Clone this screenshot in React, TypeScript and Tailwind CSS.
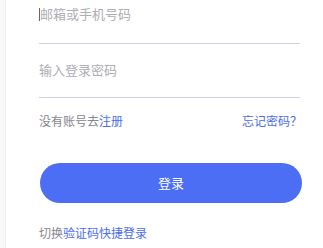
export default function App() {
  const font = { fontFamily: '"Noto Sans CJK SC", "Noto Sans", sans-serif' };
  return (
    <div className="flex h-[248px] w-[323px] overflow-hidden bg-white" style={font}>
      <div className="w-[6px] shrink-0 border-r border-[#eeeef2] bg-[#f8f8fa]" />
      <div className="flex w-[296px] flex-col pl-[33px]">
        {/* account */}
        <div className="flex h-[44px] w-[261px] items-start border-b border-[#cfd0e8] pt-[4px]">
          <span className="mt-[4px] h-[13px] w-px bg-[#666]" />
          <span className="text-[13px] leading-[20px] text-[#adadb3]">邮箱或手机号码</span>
        </div>
        {/* password */}
        <div className="flex h-[54px] w-[261px] items-start border-b border-[#cfd0e8] pt-[16px]">
          <span className="text-[13px] leading-[20px] text-[#adadb3]">输入登录密码</span>
        </div>
        <div className="mt-[14px] flex w-[263px] items-center justify-between text-[12px] leading-[18px]">
          <span className="text-[#85858d]">
            没有账号去<span className="text-[#4b6cf0]">注册</span>
          </span>
          <span className="text-[#4b6cf0]">忘记密码？</span>
        </div>
        <button className="ml-px mt-[33px] flex h-[40px] w-[262px] items-center justify-center rounded-full bg-[#4c6ef5] text-[13px] text-white">
          登录
        </button>
        <div className="mt-[21px] text-[12px] leading-[18px] text-[#85858d]">
          切换<span className="text-[#4b6cf0]">验证码快捷登录</span>
        </div>
      </div>
    </div>
  );
}
